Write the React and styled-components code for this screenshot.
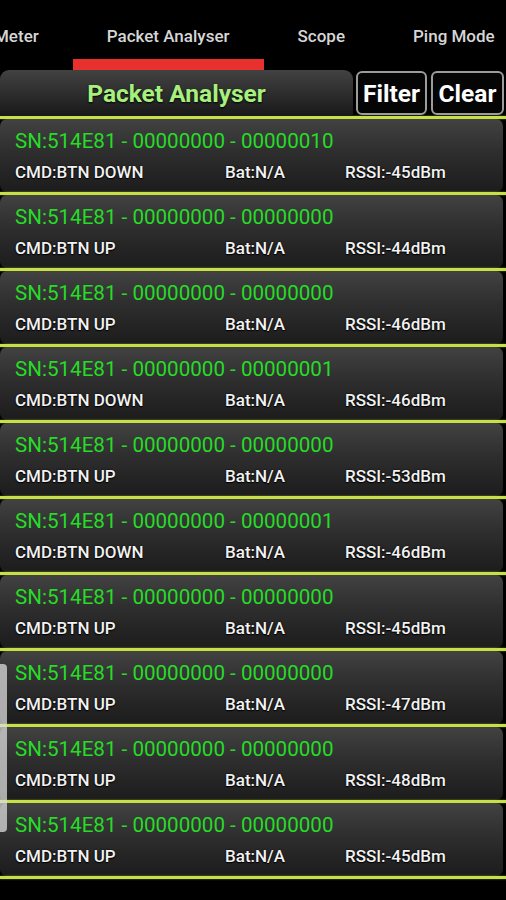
import React from 'react'
import styled, { createGlobalStyle } from 'styled-components'

const GlobalStyle = createGlobalStyle`
  html, body {
    margin: 0;
    padding: 0;
    background: #000000;
    font-family: Roboto, 'Noto Sans', 'Liberation Sans', sans-serif;
  }
  #root {
    width: 506px;
    height: 900px;
    overflow: hidden;
  }
`

const Page = styled.div`
  position: relative;
  width: 506px;
  height: 900px;
  background: #000000;
  overflow: hidden;
`

const TabStrip = styled.div`
  display: flex;
  margin-left: -40px;
`

const Tab = styled.div`
  display: flex;
  flex-direction: column;
  align-items: center;
  padding: 0 34px;
  flex: none;
`

const TabLabel = styled.span`
  height: 59px;
  box-sizing: border-box;
  padding-top: 26px;
  font-size: 17px;
  line-height: 20px;
  font-weight: 500;
  color: #d6d6d6;
  white-space: nowrap;
`

const TabIndicator = styled.div`
  align-self: stretch;
  margin: 0 -34px;
  height: 11px;
  background: ${(p) => (p.$active ? '#e8302c' : 'transparent')};
`

const HeaderRow = styled.div`
  display: flex;
  align-items: stretch;
  height: 46px;
`

const TitleBox = styled.div`
  width: 353px;
  display: flex;
  align-items: center;
  justify-content: center;
  border-radius: 9px 9px 0 0;
  background: linear-gradient(#424242, #2c2c2c 55%, #181818);
  font-size: 24.5px;
  font-weight: 700;
  color: #a8f07e;
  text-shadow: 0 1px 2px #000000;
`

const HeadButton = styled.button`
  box-sizing: border-box;
  width: ${(p) => p.$w}px;
  height: 44px;
  margin: 1px 0 1px ${(p) => p.$gap}px;
  padding: 0;
  background: #050505;
  border: 2px solid #9c9c9c;
  border-radius: 6px;
  font-family: inherit;
  font-size: 24.5px;
  font-weight: 700;
  color: #ffffff;
`

const Divider = styled.div`
  height: 3px;
  background: #c8df48;
  box-shadow: 0 0 2px rgba(200, 223, 72, 0.6);
`

const Card = styled.div`
  height: 73px;
  margin-right: 3px;
  box-sizing: border-box;
  padding: 10px 0 0 15px;
  border-radius: 7px;
  background: linear-gradient(#424242, #2e2e2e 45%, #1c1c1c);
`

const SerialLine = styled.div`
  font-size: 20.6px;
  line-height: 24px;
  color: #26dc26;
  white-space: nowrap;
`

const InfoRow = styled.div`
  display: grid;
  grid-template-columns: 210px 120px 1fr;
  margin-top: 9px;
  font-size: 17px;
  line-height: 20px;
  font-weight: 500;
  color: #f2f2f2;
  text-shadow: 0 0 2px #000000, 0 1px 1px #000000;
  white-space: nowrap;
`

const ScrollThumb = styled.div`
  position: absolute;
  left: 0;
  top: 664px;
  width: 7px;
  height: 168px;
  border-radius: 0 4px 4px 0;
  background: rgba(220, 220, 220, 0.75);
`

const tabs = ['Meter', 'Packet Analyser', 'Scope', 'Ping Mode']

const packets = [
  { tail: '00000010', cmd: 'BTN DOWN', rssi: -45 },
  { tail: '00000000', cmd: 'BTN UP', rssi: -44 },
  { tail: '00000000', cmd: 'BTN UP', rssi: -46 },
  { tail: '00000001', cmd: 'BTN DOWN', rssi: -46 },
  { tail: '00000000', cmd: 'BTN UP', rssi: -53 },
  { tail: '00000001', cmd: 'BTN DOWN', rssi: -46 },
  { tail: '00000000', cmd: 'BTN UP', rssi: -45 },
  { tail: '00000000', cmd: 'BTN UP', rssi: -47 },
  { tail: '00000000', cmd: 'BTN UP', rssi: -48 },
  { tail: '00000000', cmd: 'BTN UP', rssi: -45 },
]

const App = () => {
  return (
    <Page>
      <GlobalStyle />
      <TabStrip>
        {tabs.map((t) => (
          <Tab key={t}>
            <TabLabel>{t}</TabLabel>
            <TabIndicator $active={t === 'Packet Analyser'} />
          </Tab>
        ))}
      </TabStrip>
      <HeaderRow>
        <TitleBox>Packet Analyser</TitleBox>
        <HeadButton $w={71} $gap={3}>Filter</HeadButton>
        <HeadButton $w={73} $gap={4}>Clear</HeadButton>
      </HeaderRow>
      <Divider />
      {packets.map((p, i) => (
        <React.Fragment key={i}>
          <Card>
            <SerialLine>SN:514E81 - 00000000 - {p.tail}</SerialLine>
            <InfoRow>
              <span>CMD:{p.cmd}</span>
              <span>Bat:N/A</span>
              <span>RSSI:{p.rssi}dBm</span>
            </InfoRow>
          </Card>
          <Divider />
        </React.Fragment>
      ))}
      <ScrollThumb />
    </Page>
  )
}

export default App
